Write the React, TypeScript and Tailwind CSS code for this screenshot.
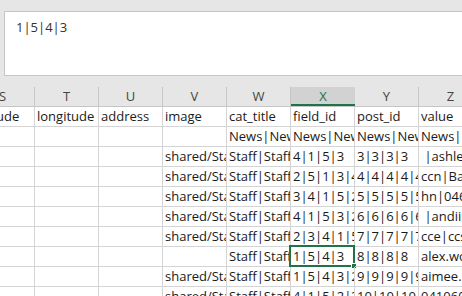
import React from "react";

const cols = ["S", "T", "U", "V", "W", "X", "Y", "Z"];
const news = "News|News|News|News|News";
const staff = "Staff|Staff|Staff|Staff";
const shared = "shared/Staff/photo.jpg";

const rows: string[][] = [
  ["latitude", "longitude", "address", "image", "cat_title", "field_id", "post_id", "value"],
  ["", "", "", "", news, news, news, news],
  ["", "", "", shared, staff, "4|1|5|3", "3|3|3|3", " |ashley.m"],
  ["", "", "", shared, staff, "2|5|1|3|4", "4|4|4|4|4", "ccn|Barbara"],
  ["", "", "", shared, staff, "3|4|1|5|2", "5|5|5|5|5", "hn|0461234"],
  ["", "", "", shared, staff, "4|1|5|3|2", "6|6|6|6|6", " |andii.w"],
  ["", "", "", shared, staff, "2|3|4|1|5", "7|7|7|7|7", "cce|ccs"],
  ["", "", "", "", staff, "1|5|4|3", "8|8|8|8", "alex.wong"],
  ["", "", "", shared, staff, "1|5|4|3|2", "9|9|9|9|9", "aimee.k"],
  ["", "", "", shared, staff, "4|1|5|2|3", "10|10|10|10", "0410601"],
];

const font = { fontFamily: '"Open Sans", "Liberation Sans", sans-serif' };

export default function App() {
  return (
    <div
      className="w-[462px] h-[296px] overflow-hidden bg-[#e6e6e6] flex flex-col"
      style={font}
    >
      <div className="h-[11px] shrink-0" />
      <div className="h-[65px] shrink-0 pl-[4px] flex">
        <div className="flex-1 bg-white border border-r-0 border-[#c6c6c6] pl-[11px] pt-[6px] text-[13px] leading-[18px] text-[#333]">
          1|5|4|3
        </div>
      </div>
      <div className="h-[11px] shrink-0" />
      <div className="flex ml-[-29px] h-[20px] shrink-0 border-b border-[#c6c6c6]">
        {cols.map((c) => (
          <div
            key={c}
            className={
              c === "X"
                ? "w-[64px] shrink-0 bg-[#d2d2d2] border-b-2 border-[#217346] text-[#217346] text-center text-[13px] leading-[18px]"
                : "w-[64px] shrink-0 border-r border-[#c6c6c6] text-[#444] text-center text-[13px] leading-[19px]"
            }
          >
            {c}
          </div>
        ))}
      </div>
      <div className="flex flex-col bg-white flex-1">
        {rows.map((r, ri) => (
          <div key={ri} className="flex ml-[-29px] h-[20px] shrink-0">
            {r.map((v, ci) => (
              <div
                key={ci}
                className="relative w-[64px] shrink-0 border-r border-b border-[#d4d4d4] text-[13px] leading-[19px] text-[#1a1a1a] pl-[2px] whitespace-pre"
              >
                <div className="overflow-hidden w-full h-full">{v}</div>
                {ri === 7 && ci === 5 && (
                  <div className="absolute left-[-2px] top-[-2px] w-[66px] h-[22px] border-2 border-[#217346] pointer-events-none">
                    <div className="absolute right-[-4px] bottom-[-4px] w-[6px] h-[6px] bg-[#217346] border border-white" />
                  </div>
                )}
              </div>
            ))}
          </div>
        ))}
      </div>
    </div>
  );
}
